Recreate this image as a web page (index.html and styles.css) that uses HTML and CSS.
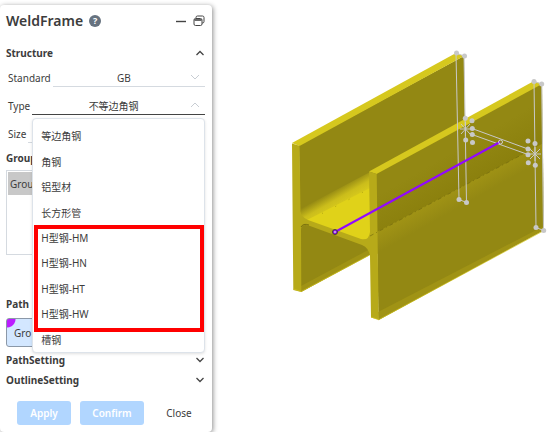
FILE: index.html
```html
<!DOCTYPE html>
<html lang="en">
<head>
    <meta charset="UTF-8">
    <meta name="viewport" content="width=device-width, initial-scale=1.0">
    <title>WeldFrame</title>
    <link rel="stylesheet" href="styles.css">
</head>
<body>
    <form class="panel">
        <header class="titlebar">
            <h1>WeldFrame</h1>
            <button type="button" class="icon-btn help" aria-label="Help">?</button>
            <span class="spacer"></span>
            <button type="button" class="icon-btn" aria-label="Minimize">
                <svg width="12" height="12" viewBox="0 0 12 12"><path d="M1 6.5h10" stroke="#444" stroke-width="1.4"/></svg>
            </button>
            <button type="button" class="icon-btn" aria-label="Undock">
                <svg width="12" height="12" viewBox="0 0 12 12" fill="none" stroke="#444">
                    <path d="M3 3V2.500Q3 1 4.500 1H9.500Q11 1 11 2.500V6.500Q11 8 9.500 8H9"/>
                    <rect x="1" y="3.500" width="8" height="7" rx="1.500"/>
                    <path d="M1.500 5h7" stroke-width="1.600"/>
                </svg>
            </button>
        </header>

        <button type="button" class="section">
            Structure
            <svg class="chevron" viewBox="0 0 10 6"><path d="M1.500 5L5 1.500L8.500 5"/></svg>
        </button>
        <div class="row">
            <label for="standard">Standard</label>
            <div class="field">
                <select id="standard"><option>GB</option></select>
                <svg class="chevron light" viewBox="0 0 10 6"><path d="M1 1L5 5L9 1"/></svg>
            </div>
        </div>
        <div class="row">
            <label for="type">Type</label>
            <div class="field open">
                <select id="type"><option>不等边角钢</option></select>
                <svg class="chevron light" viewBox="0 0 10 6"><path d="M1 5L5 1L9 5"/></svg>
                <div class="menu">
                    <button type="button">等边角钢</button>
                    <button type="button">角钢</button>
                    <button type="button">铝型材</button>
                    <button type="button">长方形管</button>
                    <button type="button">H型钢-HM</button>
                    <button type="button">H型钢-HN</button>
                    <button type="button">H型钢-HT</button>
                    <button type="button">H型钢-HW</button>
                    <button type="button">槽钢</button>
                    <div class="highlight"></div>
                </div>
            </div>
        </div>
        <div class="row">
            <label for="size">Size</label>
            <div class="field">
                <select id="size"></select>
            </div>
        </div>

        <h2 class="group-title">Group</h2>
        <div class="group-list">
            <button type="button">Group</button>
        </div>

        <h2 class="path-title">Path</h2>
        <button type="button" class="path-item">Gro</button>

        <button type="button" class="section setting">
            PathSetting
            <svg class="chevron" viewBox="0 0 10 6"><path d="M1.500 1L5 4.500L8.500 1"/></svg>
        </button>
        <button type="button" class="section setting">
            OutlineSetting
            <svg class="chevron" viewBox="0 0 10 6"><path d="M1.500 1L5 4.500L8.500 1"/></svg>
        </button>

        <footer class="actions">
            <button type="button" class="apply">Apply</button>
            <button type="button" class="confirm">Confirm</button>
            <button type="button" class="close">Close</button>
        </footer>
    </form>

    <main class="viewport">
        <svg class="model" viewBox="280 40 270 290">
            <defs>
                <linearGradient id="fillet" gradientUnits="userSpaceOnUse" x1="328" y1="193" x2="336" y2="207">
                    <stop offset="0" stop-color="#938813"/>
                    <stop offset="0.600" stop-color="#cbbd1b"/>
                    <stop offset="1" stop-color="#d6c81c"/>
                </linearGradient>
                <linearGradient id="band" gradientUnits="userSpaceOnUse" x1="440" y1="197" x2="449" y2="213">
                    <stop offset="0" stop-color="#a09315"/>
                    <stop offset="1" stop-color="#938813"/>
                </linearGradient>
                <linearGradient id="shade" gradientUnits="userSpaceOnUse" x1="430" y1="165" x2="448" y2="196">
                    <stop offset="0" stop-color="#938813"/>
                    <stop offset="1" stop-color="#8b800d"/>
                </linearGradient>
            </defs>

            <!-- rear flange -->
            <path fill="#938813" d="M299 145L464 56L466 202L301 292Z"/>
            <path fill="#d6c81e" d="M292 143L456 53L464 56L299.500 146Z"/>
            <path fill="#fff" d="M369.500 255.500L301.500 292.500V330H371Z"/>
            <path fill="#a09315" d="M301 286L370 249V255L301 292Z"/>

            <!-- web -->
            <path fill="url(#fillet)" d="M300 209L370 172V190L308 222L301 216Z"/>
            <path fill="#e0d219" d="M305 221L370 188V240L360 240Z"/>
            <path fill="none" stroke="#a39714" stroke-dasharray="1 14" stroke-width="0.800" d="M322 213.500L369 189"/>

            <!-- front flange -->
            <path fill="#938813" d="M376 173L542 83L544 230L378.500 320Z"/>
            <path fill="url(#shade)" d="M377 178L542 100V144L377 232Z"/>
            <path fill="url(#band)" d="M377 232L542 144V165L377 254Z"/>
            <path fill="#a09315" d="M378 312L544 226V230L378.500 320Z"/>
            <path fill="#d6c81e" d="M369 171.500L534 81L542 84L376.500 174Z"/>

            <!-- front section -->
            <path fill="#b7aa19" d="M292 143.500L299.500 145.700L300.500 211Q301 217 308 220L361 239Q369 241 370 232L369 171.500L376.700 174L378.700 319.700L371 317.500L370 256Q369 248 362 245L310 226Q302 223 301 229L301.300 292L293.300 290Z"/>
            <path fill="none" stroke="#625a0b" stroke-width="0.700" d="M301 227Q303 223 309 225"/>
            <path fill="none" stroke="#d0c31e" stroke-width="0.700" d="M293.500 289L301.300 291.500L369 255.300M371 317L378.700 319.700L544 230.500"/>
            <path fill="none" stroke="#6d640b" stroke-width="0.600" stroke-dasharray="4 3 1 3" d="M370 236L525 153"/>

            <!-- profile sketch -->
            <g class="sketch">
                <path d="M456 53L459 199.500L466.500 202.500L464 56ZM534 81.500L536 227.500L543.500 230.500L541.700 84ZM472 128.500L528 149M472 134.500L528 154.500"/>
                <path d="M461 124L470 134M470 124L461 134M460 129H471M465.500 122V136M530 149L540 159M540 149L530 159M529 154H541M535 147V161"/>
            </g>
            <g class="dots">
                <circle cx="456.500" cy="53" r="2.500"/><circle cx="464.500" cy="56" r="2.500"/>
                <circle cx="534" cy="81.500" r="2.500"/><circle cx="541.700" cy="84" r="2.500"/>
                <circle cx="459" cy="199.500" r="2.500"/><circle cx="466.500" cy="202.500" r="2.500"/>
                <circle cx="536" cy="227.500" r="2.500"/><circle cx="543.700" cy="230.500" r="2.500"/>
                <circle cx="465.300" cy="118.300" r="2.500"/><circle cx="472" cy="120.700" r="2.500"/>
                <circle cx="472.300" cy="128.500" r="2.500"/><circle cx="472.300" cy="134.500" r="2.500"/>
                <circle cx="465.700" cy="140" r="2.500"/><circle cx="472.500" cy="142.500" r="2.500"/>
                <circle cx="528" cy="141" r="2.500"/><circle cx="535" cy="143.500" r="2.500"/>
                <circle cx="528" cy="149" r="2.500"/><circle cx="528" cy="154.700" r="2.500"/>
                <circle cx="528.300" cy="162.700" r="2.500"/><circle cx="535.300" cy="165.300" r="2.500"/>
            </g>

            <!-- path line -->
            <path stroke="#9108ff" stroke-width="2" d="M335 232L500 142"/>
            <circle cx="500.500" cy="142" r="2" fill="none" stroke="#d0d0d0"/>
            <circle cx="335" cy="232" r="2.500" fill="#9108ff" stroke="#4c4824"/>
            <circle cx="335" cy="232" r="0.900" fill="#ddd"/>
        </svg>
    </main>
</body>
</html>
```

FILE: styles.css
```css
* {
    box-sizing: border-box;
}

body {
    display: flex;
    align-items: flex-start;
    margin: 0;
    background-color: #ffffff;
    color: #3c3c3c;
    font-family: "Noto Sans", "Noto Sans CJK SC", sans-serif;
    font-size: 10px;
}

button, select {
    border: none;
    padding: 0;
    background: none;
    color: inherit;
    font: inherit;
}

h1, h2 {
    margin: 0;
}

.panel {
    flex: none;
    width: 212px;
    margin-top: 5px;
    padding: 0 7px 7px 6px;
    border-radius: 4px;
    box-shadow: 1px 1px 5px rgba(0, 0, 0, 0.45);
}

.titlebar {
    display: flex;
    align-items: center;
    height: 31px;
}

h1 {
    font-size: 14px;
    font-weight: 600;
}

.icon-btn {
    display: flex;
    align-items: center;
    justify-content: center;
    width: 12px;
    height: 12px;
    margin-left: 6px;
}

.help {
    border-radius: 50%;
    background-color: #66727f;
    color: #ffffff;
    font-size: 9px;
    font-weight: 700;
}

.spacer {
    flex: 1;
}

.section {
    display: flex;
    align-items: center;
    justify-content: space-between;
    width: 100%;
    height: 24px;
    padding-top: 9px;
    font-weight: 700;
}

.setting {
    height: 20px;
    padding-top: 0;
}

.chevron {
    width: 10px;
    height: 6px;
    fill: none;
    stroke: #444444;
    stroke-width: 1.3;
}

.light {
    position: absolute;
    right: 5px;
    top: 6px;
    stroke: #c8cdd3;
    stroke-width: 1;
}

.row {
    display: flex;
    height: 28px;
    padding: 8px 0 0 2px;
}

.row label {
    line-height: 20px;
    margin-right: 2px;
}

.field {
    position: relative;
    flex: 1;
    height: 19px;
    border-bottom: 1px solid #d5dae0;
}

.field select {
    width: 100%;
    height: 18px;
    padding: 1px 10px 0 0;
    appearance: none;
    text-align: center;
    text-align-last: center;
}

.open {
    border-bottom-color: #444444;
}

.menu {
    position: absolute;
    z-index: 1;
    top: 22px;
    left: 0;
    right: 0;
    display: flex;
    flex-direction: column;
    height: 235px;
    padding-top: 4px;
    border: 1px solid #dde3ea;
    border-radius: 4px;
    background-color: #ffffff;
    box-shadow: 0 1px 3px rgba(0, 0, 0, 0.12);
}

.menu button {
    flex: 1;
    padding-left: 8px;
    text-align: left;
}

/* frame round the H-section entries */
.highlight {
    position: absolute;
    top: 106px;
    left: 1px;
    right: 0;
    height: 107px;
    border: 4px solid #ff0000;
    pointer-events: none;
}

h2 {
    font-size: 10px;
    font-weight: 700;
    line-height: 20px;
}

.group-title {
    margin-top: 4px;
}

.group-list {
    height: 85px;
    margin: 2px 0 0;
    padding: 1px;
    border: 1px solid #d5dae0;
}

.group-list button {
    width: 100%;
    height: 23px;
    padding-left: 2px;
    background-color: #c8c8c8;
    text-align: left;
}

.path-title {
    margin-top: 39px;
}

.path-item {
    width: 100%;
    height: 29px;
    margin-top: 4px;
    margin-bottom: 3px;
    padding-left: 7px;
    border: 1px solid #8b98a8;
    border-radius: 3px;
    background: radial-gradient(circle at 0 0, #bb1cff 8px, #d3e7ff 9px);
    text-align: left;
}

.actions {
    display: flex;
    gap: 9px;
    margin-top: 11px;
    padding-left: 11px;
}

.actions button {
    height: 24px;
    border-radius: 3px;
}

.actions .apply, .actions .confirm {
    background-color: #b1d6ff;
    color: #ffffff;
    font-weight: 600;
}

.actions .apply {
    width: 54px;
}

.actions .confirm {
    width: 64px;
}

.actions .close {
    width: 52px;
}

.viewport {
    flex: 1;
    min-width: 0;
    padding: 40px 8px 0 68px;
}

.model {
    display: block;
    width: 100%;
}

.sketch {
    fill: none;
    stroke: #c8c8c8;
    stroke-width: 1;
}

.dots {
    fill: #c8c8c8;
}
```
